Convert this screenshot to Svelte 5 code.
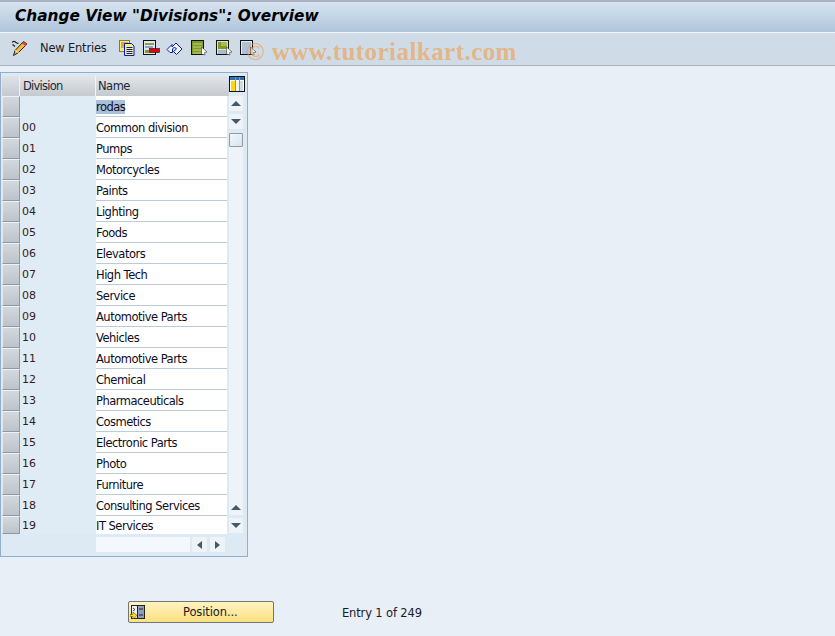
<script>
  const rows = [
    ['', 'rodas'], ['00', 'Common division'], ['01', 'Pumps'], ['02', 'Motorcycles'], ['03', 'Paints'],
    ['04', 'Lighting'], ['05', 'Foods'], ['06', 'Elevators'], ['07', 'High Tech'], ['08', 'Service'],
    ['09', 'Automotive Parts'], ['10', 'Vehicles'], ['11', 'Automotive Parts'], ['12', 'Chemical'],
    ['13', 'Pharmaceuticals'], ['14', 'Cosmetics'], ['15', 'Electronic Parts'], ['16', 'Photo'],
    ['17', 'Furniture'], ['18', 'Consulting Services'], ['19', 'IT Services']
  ];
</script>

<div class="page">
  <header class="title"><h1>Change View "Divisions": Overview</h1></header>

  <nav class="toolbar">
    <svg class="ic pencil" width="17" height="16" viewBox="0 0 17 16">
      <path d="M1 2.500c1-1.500 2.500-1.500 3.500-.5s1.500 2 3 1" fill="none" stroke="#222" stroke-width="1.200"/>
      <path d="M1.500 4.500l2.500 2" stroke="#222" stroke-width="1.200"/>
      <path d="M12.500 1.500l3.500 2.500-8.500 8.500-5 3 1.500-5z" fill="#f6b73c" stroke="#222"/>
      <path d="M12.500 1.500l3.500 2.500-1.500 2-3.500-2.500z" fill="#d8443c"/>
      <path d="M4 10.500l3.500 2" stroke="#fff2b0"/>
    </svg>
    <span class="new">New Entries</span>
    <svg class="ic copy" width="16" height="16" viewBox="0 0 16 16">
      <rect x="0.500" y="0.500" width="10" height="11" fill="#ffe97a" stroke="#8a7a20"/>
      <path d="M2 3h7M2 5h7M2 7h7" stroke="#8a7a20"/>
      <path d="M5.500 3.500h7l2.500 2.500v9.500h-9.500z" fill="#fff26b" stroke="#0018c8"/>
      <path d="M7.500 7.500h6M7.500 9.500h6M7.500 11.500h6M7.500 13.500h6" stroke="#0018c8"/>
    </svg>
    <svg class="ic del" width="17" height="16" viewBox="0 0 17 16">
      <rect x="0.500" y="0.500" width="12" height="14" fill="#dfe8ee" stroke="#111"/>
      <path d="M2 3h9v2H2z" fill="#8f9f3a"/><path d="M2 6h8v2H2z" fill="#8ba4c4"/><path d="M2 10h4v3H2z" fill="#7f9a25"/>
      <rect x="6.500" y="8.500" width="10" height="4" fill="#e00010" stroke="#111" stroke-width="0.600"/>
    </svg>
    <svg class="ic undo" width="17" height="16" viewBox="0 0 17 16">
      <path d="M1 9.500l5-5v2.500l4-4 6 6-5.500 5.500-3-3 3-2.500-2-2-2 2v3.500h-2.500z" fill="#eef3ff" stroke="#0a1f9c"/>
    </svg>
    <svg class="ic sel" width="17" height="16" viewBox="0 0 17 16">
      <rect x="0.500" y="0.500" width="12" height="14" fill="#7f9a25" stroke="#111"/>
      <path d="M2 4h9M2 7h9M2 10h9M2 13h9" stroke="#c6d57f"/>
      <path d="M10.500 7l5.500 5-2.500.5.500 2.500-3.500-1z" fill="#fff" stroke="#333" stroke-width="0.600"/>
    </svg>
    <svg class="ic sel2" width="17" height="16" viewBox="0 0 17 16">
      <rect x="0.500" y="0.500" width="12" height="14" fill="#d6e0e8" stroke="#111"/>
      <path d="M2 2h9v7H2z" fill="#7f9a25"/>
      <path d="M5 2h6v4H5z" fill="#a8bc4a"/>
      <path d="M2 11h9M2 13h9" stroke="#7a97b8"/>
      <path d="M10.500 7l5.500 5-2.500.5.500 2.500-3.500-1z" fill="#fff" stroke="#333" stroke-width="0.600"/>
    </svg>
    <svg class="ic sel3" width="17" height="16" viewBox="0 0 17 16">
      <rect x="0.500" y="0.500" width="12" height="14" fill="#e4ebf0" stroke="#111"/>
      <path d="M2 3h9M2 5h9M2 7h9M2 9h9M2 11h9M2 13h9" stroke="#7a97b8"/>
      <path d="M10.500 7l5.500 5-2.500.5.500 2.500-3.500-1z" fill="#fff" stroke="#333" stroke-width="0.600"/>
    </svg>
  </nav>
  <div class="mark">© www.tutorialkart.com</div>

  <main class="content">
    <section class="table">
      <div class="thead">
        <div class="corner"></div>
        <div class="th div">Division</div>
        <div class="th name">Name</div>
        <svg class="cfg" width="16" height="16" viewBox="0 0 16 16">
          <rect x="0" y="0" width="16" height="16" fill="#111"/>
          <rect x="1" y="1" width="14" height="14" fill="#fff"/>
          <rect x="1" y="1" width="14" height="3" fill="#2f6fb0"/>
          <rect x="2" y="5" width="4" height="10" fill="#ffd800"/>
          <rect x="7" y="5" width="3" height="10" fill="#f4f4f4"/>
          <rect x="11" y="5" width="3" height="10" fill="#d2dae2"/>
          <path d="M6.500 1v14M10.500 1v14" stroke="#7f98b0"/>
        </svg>
      </div>
      <div class="tbody">
        <div class="rows">
          {#each rows as r, i}
            <div class="row" class:last={i === rows.length - 1}>
              <div class="sel-btn"></div>
              <div class="key">{r[0]}</div>
              <div class="val"><span class:hl={i === 0}>{r[1]}</span></div>
            </div>
          {/each}
        </div>
        <div class="vscroll">
          <div class="sbtn"><i class="up"></i></div>
          <div class="sbtn"><i class="down"></i></div>
          <div class="thumb"></div>
          <div class="track"></div>
          <div class="sbtn"><i class="up"></i></div>
          <div class="sbtn end"><i class="down"></i></div>
        </div>
      </div>
      <div class="hscroll">
        <div class="htrack"></div>
        <div class="hbtn"><i class="left"></i></div>
        <div class="hbtn"><i class="right"></i></div>
      </div>
    </section>

    <footer class="foot">
      <button class="pos">
        <svg width="15" height="16" viewBox="0 0 15 16">
          <rect x="1.500" y="1.500" width="13" height="13" fill="#8e9cc0" stroke="#222"/>
          <rect x="1.500" y="1.500" width="6" height="13" fill="#eef2f8" stroke="#222"/>
          <path d="M9 5h4M9 11h4" stroke="#222"/>
          <path d="M3 4l2 1.500-2 1.500" fill="none" stroke="#445"/>
          <path d="M0 10.500h3V8l4 3.500L3 15v-2.500H0z" fill="#ffe000" stroke="#6b5a00" stroke-width="0.600"/>
        </svg>
        <span>Position...</span>
      </button>
      <span class="entry">Entry 1 of 249</span>
    </footer>
  </main>
</div>

<style>
  :global(body) { margin: 0; background: #e8eff7; }
  .page {
    position: relative;
    width: 835px; height: 636px; overflow: hidden;
    background: #e8eff7;
    font-family: "DejaVu Sans", sans-serif;
    font-size: 11.500px; color: #111;
  }
  .title {
    box-sizing: border-box; height: 33px;
    border-top: 2px solid #a9b2bf;
    border-bottom: 1px solid #f0f5f9;
    background: linear-gradient(#d7e4ef, #afc5db);
    padding-left: 15px;
    display: flex; align-items: center;
  }
  h1 {
    margin: 0 0 3px; font-size: 15.350px; font-style: italic; font-weight: bold;
    font-family: "DejaVu Sans", sans-serif; color: #000;
    white-space: nowrap;
  }
  .toolbar {
    box-sizing: border-box; height: 33px;
    background: #cfdce7;
    border-bottom: 1px solid #a9b2bb;
    display: flex; align-items: center;
    padding: 0 0 2px 11px;
  }
  .ic { flex: none; }
  .new { margin-left: 12px; margin-right: 12px; width: 67px; white-space: nowrap; font-size: 11.500px; letter-spacing: -0.200px; color: #1a1a2a; }
  .del { margin-left: 8px; }
  .undo { margin-left: 6px; }
  .sel { margin-left: 8px; }
  .sel2 { margin-left: 8px; }
  .sel3 { margin-left: 7px; }
  .mark {
    position: absolute; left: 246px; top: 38px;
    font-family: "Liberation Serif", serif; font-weight: bold; font-size: 25px;
    color: rgba(238, 160, 80, 0.650); white-space: nowrap; letter-spacing: 0.450px;
  }
  .content { padding-top: 6px; }
  .table {
    box-sizing: border-box; width: 248px; height: 485px;
    border: 1px solid #93aec9;
    background: #dde9f3;
    padding-top: 3px;
  }
  .thead { display: flex; height: 20px; padding-left: 1px; }
  .corner { box-sizing: border-box; width: 18px; background: linear-gradient(#dfe3e7, #c4cad0); border-right: 1px solid #eef2f6; }
  .th {
    box-sizing: border-box; background: linear-gradient(#e2e5e8, #c5cacf);
    line-height: 20px; border-right: 1px solid #f2f5f8;
    font-size: 11.500px; letter-spacing: -0.750px; color: #1a2a3a;
  }
  .th.div { width: 76px; padding-left: 3px; }
  .th.name { width: 133px; border-right: 0; padding-left: 2px; letter-spacing: -0.500px; }
  .tbody { display: flex; }
  .rows { width: 226px; flex: none; }
  .row { display: flex; height: 21px; }
  .row.last { height: 18px; }
  .sel-btn {
    box-sizing: border-box; width: 18px; margin-left: 1px; flex: none;
    background: linear-gradient(#d3d8dc, #bcc3ca);
    border: 1px solid #8d99a5; border-top-color: #eef2f6; border-left-color: #e4e9ee;
  }
  .key {
    box-sizing: border-box; width: 76px; flex: none; padding-left: 2px;
    background: #dfebf5; line-height: 22px;
    font-size: 11px; color: #3a1a1a;
  }
  .val {
    box-sizing: border-box; flex: 1;
    background: #fff; border-bottom: 1px solid #bccbd9; line-height: 22px;
    font-size: 11.500px; letter-spacing: -0.500px; color: #0c0c1e; white-space: nowrap;
  }
  .last .val { border-bottom: 0; line-height: 20px; }
  .last .key { line-height: 20px; }
  .hl { background: #a9c0d8; }
  .vscroll { width: 19px; flex: none; padding-left: 2px; box-sizing: border-box; display: flex; flex-direction: column; }
  .sbtn {
    width: 14px; height: 15px; margin: 0 0 3px 0; background: #eef3f8;
    display: flex; align-items: center; justify-content: center; flex: none;
  }
  .sbtn.end { margin-bottom: 1px; }
  .thumb {
    box-sizing: border-box; width: 14px; height: 14px; flex: none; margin-top: 1px;
    border: 1px solid #8f9ba8; border-radius: 1px;
    background: linear-gradient(135deg, #f4f7fa, #d8e2ec);
  }
  .track { flex: 1; background: #eef3f8; width: 14px; }
  i { display: block; width: 0; height: 0; border-style: solid; border-color: transparent; }
  .up { border-width: 0 5px 5px; border-bottom-color: #44586c; }
  .down { border-width: 5px 5px 0; border-top-color: #44586c; }
  .left { border-width: 4px 5px 4px 0; border-right-color: #44586c; }
  .right { border-width: 4px 0 4px 5px; border-left-color: #44586c; }
  .hscroll { display: flex; height: 15px; margin-top: 3px; padding-left: 95px; gap: 3px; }
  .htrack { width: 94px; background: #f4f7fb; margin-right: -1px; }
  .hbtn { width: 15px; height: 15px; background: #eef3f8; display: flex; align-items: center; justify-content: center; }
  .foot { display: flex; align-items: center; height: 22px; margin-top: 44px; padding-left: 128px; }
  .pos {
    box-sizing: border-box; width: 146px; height: 22px; padding: 0 0 0 1px;
    border: 1px solid #6f7478; border-radius: 2px;
    background: linear-gradient(#fff3c0, #fcdf80);
    display: flex; align-items: center; font: inherit; color: #1a1a2a;
    letter-spacing: -0.100px;
  }
  .pos span { margin-left: 38px; }
  .entry { margin-left: 68px; padding-top: 2px; letter-spacing: -0.150px; color: #1a1a2a; }
</style>
